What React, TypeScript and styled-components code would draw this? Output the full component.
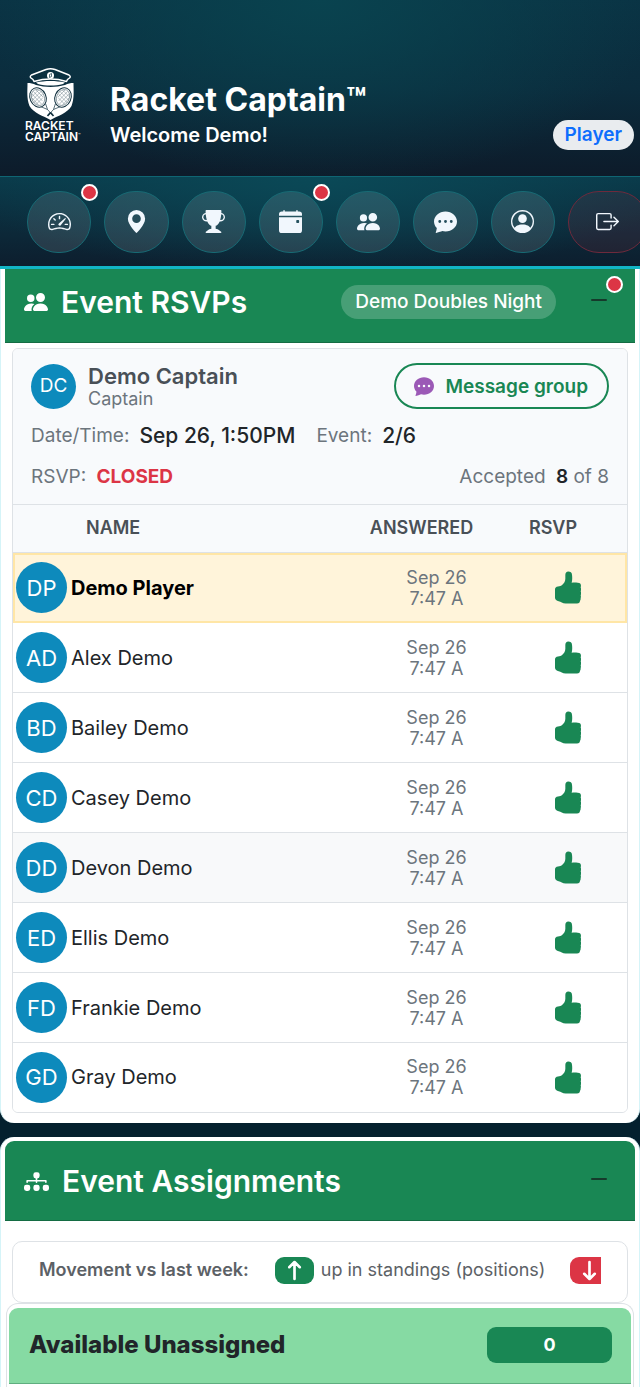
import React from "react";
// STYLE
import styled, { createGlobalStyle, css } from "styled-components";
// ICONS
import {
  BsArrowDown,
  BsArrowUp,
  BsBoxArrowRight,
  BsCalendarEventFill,
  BsChatDotsFill,
  BsDiagram3Fill,
  BsGeoAltFill,
  BsPeopleFill,
  BsPersonCircle,
  BsSpeedometer2,
  BsTrophyFill,
} from "react-icons/bs";

const GlobalStyle = createGlobalStyle`
  * {
    box-sizing: border-box;
  }

  body {
    margin: 0;
    background-color: #04202e;
    color: #212529;
    font-family: Inter, "Liberation Sans", sans-serif;
    font-size: 18px;
    line-height: 22px;
  }

  h1, h2, h3, p {
    margin: 0;
  }

  button {
    font-family: inherit;
    cursor: pointer;
  }
`;

const Page = styled.div`
  overflow: hidden;
`;

const Header = styled.header`
  display: flex;
  align-items: flex-end;
  height: 177px;
  padding: 0 6px 26px 25px;
  border-bottom: 1px solid #0f6573;
  background: radial-gradient(ellipse at 50% 0, #09434f 0%, rgba(9, 67, 79, 0) 75%),
    linear-gradient(180deg, #0a3344 0%, #0b2c3d 50%, #0d1b2a 100%);
`;

const Logo = styled.div`
  width: 85px;
  margin-bottom: 8px;
  color: #ffffff;

  svg {
    display: block;
  }
`;

const LogoText = styled.div`
  font-size: 12px;
  font-weight: 600;
  line-height: 11px;

  sup {
    font-size: 4px;
    line-height: 0;
    vertical-align: 4px;
  }
`;

const Brand = styled.div`
  flex: 1;
  padding-bottom: 4px;
  color: #ffffff;
`;

const BrandTitle = styled.h1`
  font-size: 32px;
  font-weight: 700;
  line-height: 40px;
`;

const Welcome = styled.p`
  padding-top: 4px;
  font-size: 20px;
  font-weight: 600;
  line-height: 22px;
`;

const RolePill = styled.span`
  padding: 3px 12px;
  border-radius: 15px;
  background-color: #e9ecef;
  color: #0d6efd;
  font-size: 19px;
  font-weight: 600;
  line-height: 24px;
`;

const Nav = styled.nav`
  display: grid;
  grid-template-columns: repeat(7, 1fr) 72px;
  gap: 13px;
  height: 92px;
  padding: 14px 0 0 27px;
  border-bottom: 3px solid #12b5c5;
  background: radial-gradient(ellipse at 50% 0, #0a4957 0%, rgba(10, 73, 87, 0) 80%),
    linear-gradient(180deg, #0a3a4a 0%, #0d1e2e 100%);
`;

const NavButton = styled.button<{ $danger?: boolean }>`
  position: relative;
  display: flex;
  align-items: center;
  justify-content: center;
  height: 62px;
  padding: 0 0 2px;
  border: 1px solid #176a74;
  border-radius: 32px;
  background-color: rgba(255, 255, 255, 0.11);
  color: #f1f7fd;

  ${({ $danger }) =>
    $danger &&
    css`
      width: 80px;
      border-color: #6e2a3c;
      background-color: rgba(220, 53, 69, 0.1);
    `}
`;

const Dot = styled.span`
  position: absolute;
  top: -8px;
  right: -8px;
  width: 17px;
  height: 17px;
  border: 2px solid #ffffff;
  border-radius: 50%;
  background-color: #dc3545;
`;

const Card = styled.section<{ $joined?: boolean }>`
  margin-bottom: 14px;
  padding: ${({ $joined }) => ($joined ? "0 4px 10px" : "4px 4px 0")};
  border: solid #d5f4f8;
  border-width: 0 1px;
  border-radius: ${({ $joined }) => ($joined ? "0 0 14px 14px" : "14px 14px 0 0")};
  background-color: #ffffff;

  &:last-child {
    margin-bottom: 0;
  }
`;

const CardHeader = styled.div<{ $joined?: boolean }>`
  display: flex;
  align-items: center;
  height: ${({ $joined }) => ($joined ? "74px" : "80px")};
  padding: ${({ $joined }) => ($joined ? "0 20px 8px 19px" : "2px 20px 0 19px")};
  border-bottom: 1px solid #146c43;
  border-radius: ${({ $joined }) => ($joined ? "0" : "9px 9px 0 0")};
  background-color: #198754;
  color: #ffffff;
`;

const CardTitle = styled.h2`
  flex: 1;
  padding-left: 13px;
  font-size: 30px;
  font-weight: 600;
  line-height: 40px;
`;

const EventPill = styled.span`
  margin-right: 27px;
  padding: 5px 14px;
  border-radius: 17px;
  background-color: #479f76;
  font-size: 19px;
  font-weight: 500;
  line-height: 24px;
`;

const CollapseButton = styled.button`
  position: relative;
  display: flex;
  align-items: center;
  justify-content: center;
  width: 32px;
  height: 36px;
  padding: 0 0 4px;
  border: none;
  background: none;

  &::before {
    content: "";
    width: 16px;
    height: 2px;
    border-radius: 1px;
    background-color: #153a2b;
  }
`;

const Panel = styled.div`
  margin: 5px 7px 0;
  overflow: hidden;
  border: 1px solid #dee2e6;
  border-radius: 6px;
`;

const Info = styled.div`
  padding: 14px 18px 16px;
  background-color: #f8fafc;
  color: #6c757d;
  font-size: 19px;
`;

const InfoRow = styled.div`
  display: flex;
  align-items: center;
`;

const Avatar = styled.span<{ $small?: boolean }>`
  display: flex;
  flex: none;
  align-items: center;
  justify-content: center;
  width: ${({ $small }) => ($small ? "45px" : "51px")};
  height: ${({ $small }) => ($small ? "45px" : "51px")};
  border-radius: 50%;
  background-color: #0d8abc;
  color: #ffffff;
  font-size: ${({ $small }) => ($small ? "19px" : "22px")};
`;

const Captain = styled.div`
  flex: 1;
  padding-left: 12px;
  font-size: 18px;
  line-height: 20px;
`;

const CaptainName = styled.h3`
  color: #495057;
  font-size: 22px;
  font-weight: 600;
  line-height: 26px;
`;

const MessageButton = styled.button`
  display: flex;
  align-items: center;
  gap: 11px;
  height: 46px;
  padding: 0 19px 0 18px;
  border: 2px solid #198754;
  border-radius: 23px;
  background: none;
  color: #198754;
  font-size: 19px;
  font-weight: 600;

  svg {
    color: #9b59b6;
  }
`;

const Schedule = styled(InfoRow)`
  padding-top: 16px;
`;

const Strong = styled.strong`
  padding: 0 21px 0 10px;
  color: #212529;
  font-size: 21px;
  font-weight: 500;
`;

const Status = styled(InfoRow)`
  justify-content: space-between;
  padding-top: 19px;

  b {
    margin-left: 5px;
    color: #212529;
    font-weight: 600;
  }
`;

const Closed = styled.strong`
  margin-left: 5px;
  color: #dc3545;
  font-weight: 700;
`;

const Players = styled.table`
  width: 100%;
  table-layout: fixed;
  border-collapse: collapse;
`;

const HeadCell = styled.th<{ $width?: string; $left?: boolean }>`
  width: ${({ $width }) => $width || "auto"};
  height: 48px;
  padding: ${({ $left }) => ($left ? "0 0 0 73px" : "0 30px 0 0")};
  border-top: 1px solid #dee2e6;
  border-bottom: 2px solid #dee2e6;
  background-color: #f8fafc;
  color: #495057;
  font-size: 18px;
  font-weight: 600;
  text-align: ${({ $left }) => ($left ? "left" : "center")};
`;

const PlayerRow = styled.tr<{ $me?: boolean; $shaded?: boolean }>`
  height: 70px;
  border-bottom: 1px solid #dee2e6;
  background-color: ${({ $shaded }) => ($shaded ? "#f8f9fa" : "#ffffff")};

  &:last-child {
    height: 69px;
    border-bottom: none;
  }

  ${({ $me }) =>
    $me &&
    css`
      background-color: #fff4da;
      outline: 2px solid #ffe6a6;
      outline-offset: -2px;
      color: #000000;
      font-weight: 700;
    `}
`;

const Cell = styled.td`
  padding: 0;
  color: #6c757d;
  font-size: 18px;
  font-weight: 400;
  line-height: 21px;
  text-align: center;

  svg {
    display: block;
    margin: 0 auto;
  }
`;

const NameCell = styled.td`
  padding: 0;
`;

const Player = styled.div`
  display: flex;
  align-items: center;
  gap: 4px;
  padding-left: 3px;
  font-size: 20px;

  ${Avatar} {
    font-weight: 400;
  }
`;

const Legend = styled.div`
  margin: 20px 7px 0;
  padding: 15px 26px 18px;
  border: 1px solid #dee2e6;
  border-radius: 10px;
  color: #5c6166;
  font-size: 18px;
`;

const LegendItems = styled.div`
  display: flex;
  align-items: center;
  overflow: hidden;
  white-space: nowrap;

  strong {
    margin-right: 26px;
    font-weight: 600;
  }
`;

const MoveBadge = styled.span<{ $down?: boolean }>`
  display: flex;
  flex: none;
  align-items: center;
  justify-content: center;
  width: 39px;
  height: 27px;
  margin: ${({ $down }) => ($down ? "0 0 0 25px" : "0 7px 0 0")};
  border-radius: 9px;
  background-color: ${({ $down }) => ($down ? "#dc3545" : "#198754")};
  color: #ffffff;

  svg {
    stroke: currentColor;
    stroke-width: 1;
  }
`;

const Group = styled.div`
  margin: 0 1px;
  padding: 4px 2px 3px;
  border: 1px solid #dee2e6;
  border-bottom: none;
  border-radius: 12px 12px 0 0;
`;

const GroupHeader = styled.div`
  display: flex;
  align-items: center;
  justify-content: space-between;
  height: 76px;
  padding: 0 19px 0 20px;
  border-bottom: 1px solid #5fae7f;
  border-radius: 9px 9px 0 0;
  background-color: #86daa3;

  h3 {
    font-size: 24px;
    font-weight: 800;
    line-height: 30px;
  }
`;

const Count = styled.span`
  width: 125px;
  border-radius: 9px;
  background-color: #198754;
  color: #ffffff;
  font-size: 18px;
  font-weight: 700;
  line-height: 36px;
  text-align: center;
`;

const LogoMark = () => (
  <svg width="50" height="52" viewBox="0 0 50 52" fill="none" aria-hidden="true">
    <path
      d="M9 13.500 8 11.500 6 10C5 9 5 8 6.500 7L21 1.500c3-1 6-1 9 0L44 7c1.500 1 1.500 2 .5 3l-2 1.500-1 2c-10-3-22-3-32.500 0Z"
      stroke="#fff"
      strokeWidth="1.500"
      strokeLinejoin="round"
    />
    <circle cx="25.500" cy="7.500" r="3.500" fill="#fff" />
    <path d="M24.500 9.500v-3l2-1v3z" stroke="#0b3040" strokeWidth=".7" />
    <path d="M11 14.500c9-2 20-2 29 0l-2 1.500c-8 2-17 2-25 0z" fill="#fff" />
    <path
      d="M2.500 15c3 0 5.500.5 8.500 2 9 2.500 20 2.500 29 0 3-1.500 5.500-2 8.500-2 0 8 1 15-2 23-4 7-14 10-21 14C18.500 48 8.500 45 4.500 38c-3-8-2-15-2-23Z"
      fill="#fff"
    />
    {[-1, 1].map((side) => (
      <g key={side} transform={`translate(25.500 0) scale(${side} 1)`} stroke="#12313f">
        <ellipse
          cx="12.500"
          cy="29.500"
          rx="8"
          ry="10"
          transform="rotate(24 12.500 29.500)"
          strokeWidth="1"
        />
        <ellipse
          cx="12.500"
          cy="29.500"
          rx="6.300"
          ry="8.300"
          transform="rotate(24 12.500 29.500)"
          strokeWidth=".4"
        />
        <path
          d="M8 26l9 9M9.500 23.500l9 9M12 22l7 7M7.500 29.500l7 7M8 33l9-9.500M9 36l10-10.500M12 37l7-7.500M7.500 29l7-7"
          strokeWidth=".3"
        />
        <path d="M10 38.500 3 41.500M5 35.500 3 41.500-2 47" strokeWidth=".7" />
        <path d="M0 44.500l-3 3.500" strokeWidth="1.700" />
      </g>
    ))}
  </svg>
);

const ThumbUp = () => (
  <svg width="26" height="33" viewBox="0 0 78 98" role="img" aria-label="Accepted">
    <path
      d="M40 1c-6 0-9 4-9 10v12c0 8-4 13-9 18-3 4-8 4-13 5-6 1-9 4-9 9v25c0 6 5 9 11 10 7 1 11 7 21 7h34c6 0 9-3 9-8 2-3 2-5 2-8 1-4 1-6 0-9 2-5 2-8 0-12 2-4 2-7 0-10 2-10 1-14-9-15-6-1-12-1-18 0 2-8 2-16 1-24 0-7-5-10-11-10Z"
      fill="#198754"
    />
  </svg>
);

const NAV_ITEMS = [
  { label: "Dashboard", icon: BsSpeedometer2, alert: true },
  { label: "Locations", icon: BsGeoAltFill },
  { label: "Standings", icon: BsTrophyFill },
  { label: "Events", icon: BsCalendarEventFill, alert: true },
  { label: "Players", icon: BsPeopleFill },
  { label: "Messages", icon: BsChatDotsFill },
  { label: "Profile", icon: BsPersonCircle },
  { label: "Log out", icon: BsBoxArrowRight, danger: true },
];

const PLAYERS = [
  { initials: "DP", name: "Demo Player", me: true },
  { initials: "AD", name: "Alex Demo" },
  { initials: "BD", name: "Bailey Demo" },
  { initials: "CD", name: "Casey Demo" },
  { initials: "DD", name: "Devon Demo", shaded: true },
  { initials: "ED", name: "Ellis Demo" },
  { initials: "FD", name: "Frankie Demo" },
  { initials: "GD", name: "Gray Demo" },
];

const App: React.FC = () => {
  return (
    <Page>
      <GlobalStyle />
      <Header>
        <Logo>
          <LogoMark />
          <LogoText>
            RACKET
            <br />
            CAPTAIN<sup>™</sup>
          </LogoText>
        </Logo>
        <Brand>
          <BrandTitle>Racket Captain™</BrandTitle>
          <Welcome>Welcome Demo!</Welcome>
        </Brand>
        <RolePill>Player</RolePill>
      </Header>
      <Nav>
        {NAV_ITEMS.map(({ label, icon: Icon, alert, danger }) => (
          <NavButton key={label} type="button" aria-label={label} $danger={danger}>
            <Icon size={23} />
            {alert && <Dot />}
          </NavButton>
        ))}
      </Nav>

      <Card $joined>
        <CardHeader $joined>
          <BsPeopleFill size={24} />
          <CardTitle>Event RSVPs</CardTitle>
          <EventPill>Demo Doubles Night</EventPill>
          <CollapseButton type="button" aria-label="Collapse Event RSVPs">
            <Dot />
          </CollapseButton>
        </CardHeader>
        <Panel>
          <Info>
            <InfoRow>
              <Avatar $small>DC</Avatar>
              <Captain>
                <CaptainName>Demo Captain</CaptainName>
                <p>Captain</p>
              </Captain>
              <MessageButton type="button">
                <BsChatDotsFill size={20} />
                Message group
              </MessageButton>
            </InfoRow>
            <Schedule>
              <span>Date/Time:</span>
              <Strong>Sep 26, 1:50PM</Strong>
              <span>Event:</span>
              <Strong>2/6</Strong>
            </Schedule>
            <Status>
              <span>
                RSVP: <Closed>CLOSED</Closed>
              </span>
              <span>
                Accepted <b>8</b> of 8
              </span>
            </Status>
          </Info>
          <Players>
            <thead>
              <tr>
                <HeadCell $left>NAME</HeadCell>
                <HeadCell $width="145px">ANSWERED</HeadCell>
                <HeadCell $width="118px">RSVP</HeadCell>
              </tr>
            </thead>
            <tbody>
              {PLAYERS.map(({ initials, name, me, shaded }) => (
                <PlayerRow key={name} $me={me} $shaded={shaded}>
                  <NameCell>
                    <Player>
                      <Avatar>{initials}</Avatar>
                      {name}
                    </Player>
                  </NameCell>
                  <Cell>
                    Sep 26
                    <br />
                    7:47 A
                  </Cell>
                  <Cell>
                    <ThumbUp />
                  </Cell>
                </PlayerRow>
              ))}
            </tbody>
          </Players>
        </Panel>
      </Card>

      <Card>
        <CardHeader>
          <BsDiagram3Fill size={25} />
          <CardTitle>Event Assignments</CardTitle>
          <CollapseButton type="button" aria-label="Collapse Event Assignments" />
        </CardHeader>
        <Legend>
          <LegendItems>
            <strong>Movement vs last week:</strong>
            <MoveBadge>
              <BsArrowUp size={21} />
            </MoveBadge>
            up in standings (positions)
            <MoveBadge $down>
              <BsArrowDown size={21} />
            </MoveBadge>
          </LegendItems>
        </Legend>
        <Group>
          <GroupHeader>
            <h3>Available Unassigned</h3>
            <Count>0</Count>
          </GroupHeader>
        </Group>
      </Card>
    </Page>
  );
};

export default App;
